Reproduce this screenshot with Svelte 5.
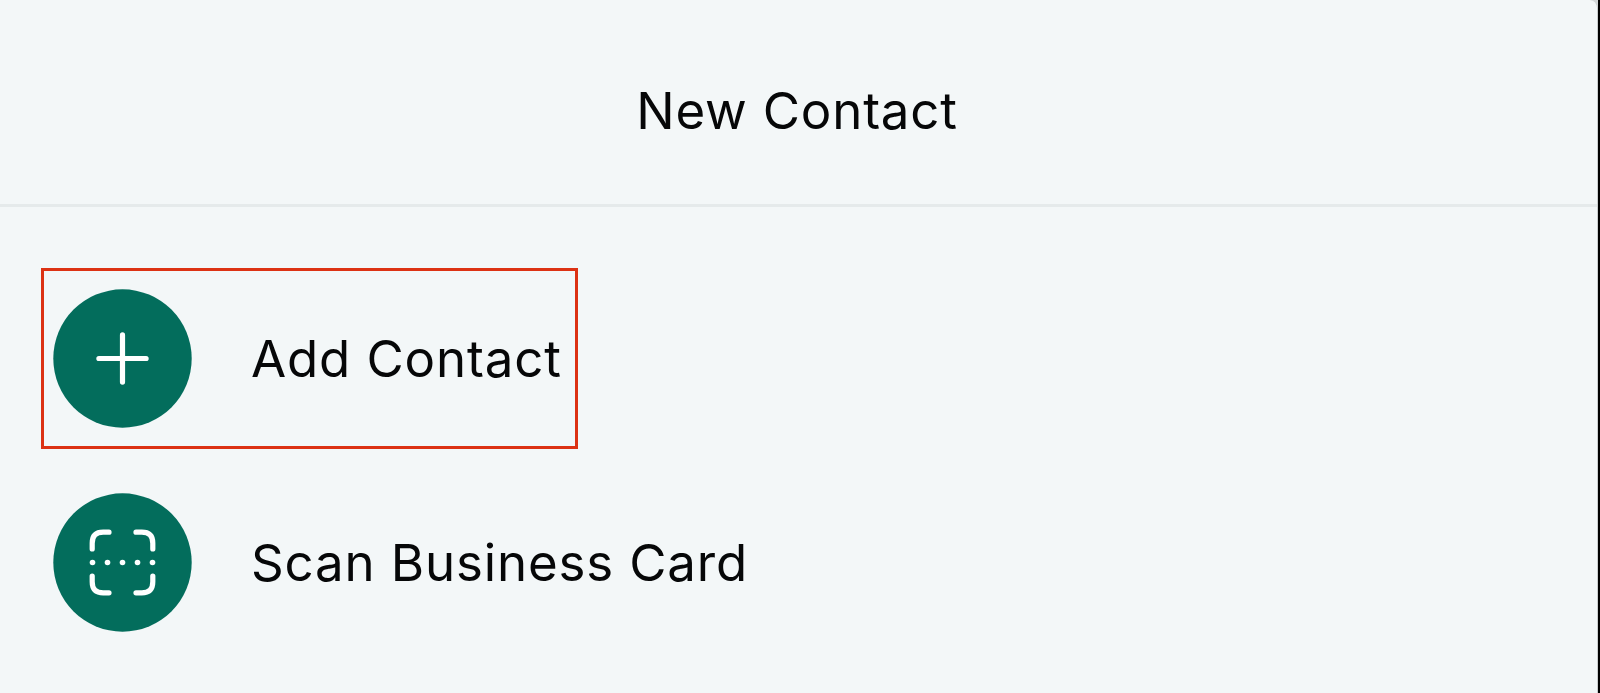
<script lang="ts">
  interface Action {
    id: string
    label: string
    icon: 'plus' | 'scan'
  }

  const actions: Action[] = [
    { id: 'add', label: 'Add Contact', icon: 'plus' },
    { id: 'scan', label: 'Scan Business Card', icon: 'scan' },
  ]

  let selected = $state('add')
</script>

<div class="sheet">
  <header class="sheet-header">
    <h1>New Contact</h1>
  </header>

  <div class="actions">
    {#each actions as action (action.id)}
      <button
        class="action"
        class:selected={selected === action.id}
        onclick={() => (selected = action.id)}
      >
        <svg class="action-icon" viewBox="-69.5 -69.5 139 139" aria-hidden="true">
          <circle class="disc" r="69.2" />
          {#if action.icon === 'plus'}
            <path class="stroke" d="M-23.6 0H23.6M0 -23.6V23.6" />
          {:else}
            <path
              class="stroke"
              d="M-30.3 -13.5V-19.3Q-30.3 -30.3 -19.3 -30.3H-13.5M13.5 -30.3H19.3Q30.3 -30.3 30.3 -19.3V-13.5M30.3 13.5V19.3Q30.3 30.3 19.3 30.3H13.5M-13.5 30.3H-19.3Q-30.3 30.3 -30.3 19.3V13.5"
            />
            {#each [-30, -15, 0, 15, 30] as x}
              <circle class="dot" cx={x} r="2.8" />
            {/each}
          {/if}
        </svg>
        <span>{action.label}</span>
      </button>
    {/each}
  </div>
</div>

<style>
  :global(body) {
    background: linear-gradient(to right, #d3d7d8 calc(100% - 2px), #000 calc(100% - 2px));
  }

  .sheet {
    box-sizing: border-box;
    width: calc(100vw - 2px);
    height: 100vh;
    overflow: hidden;
    background: #f3f7f8;
    border-right: 1px solid #c9cdce;
    border-top-right-radius: 8px;
    color: #060708;
    font-family: Inter, 'Liberation Sans', sans-serif;
  }

  .sheet-header {
    box-sizing: border-box;
    display: flex;
    justify-content: center;
    height: 207px;
    padding: 80px 3px 0 0;
    border-bottom: 3px solid #e5eaeb;
  }

  h1 {
    margin: 0;
    font-size: 51px;
    font-weight: 400;
    line-height: 62px;
    letter-spacing: 0.8px;
  }

  .actions {
    display: flex;
    flex-direction: column;
    align-items: flex-start;
    gap: 23px;
    padding: 61px 41px;
  }

  .action {
    box-sizing: border-box;
    display: flex;
    align-items: center;
    gap: 59px;
    height: 181px;
    padding: 0 13.2px 0 9px;
    background: transparent;
    border: 3px solid transparent;
    color: inherit;
    font: inherit;
    font-size: 51px;
    line-height: 62px;
    letter-spacing: 0.85px;
    white-space: nowrap;
    cursor: pointer;
  }

  .action.selected {
    border-color: #dc3214;
  }

  .action-icon {
    flex: none;
    width: 139px;
    height: 139px;
  }

  .disc {
    fill: #036d5c;
  }

  .stroke {
    fill: none;
    stroke: #fff;
    stroke-width: 5.2;
    stroke-linecap: round;
  }

  .dot {
    fill: #fff;
  }
</style>
